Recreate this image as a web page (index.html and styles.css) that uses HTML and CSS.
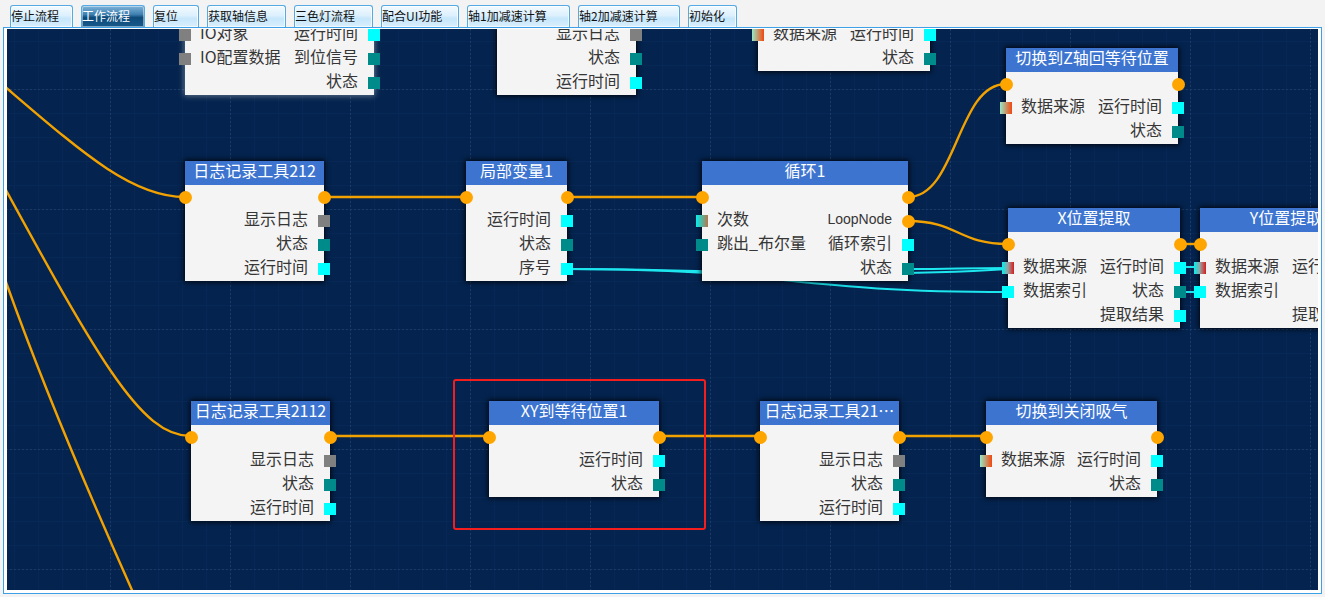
FILE: index.html
```html
<!DOCTYPE html>
<html lang="zh-CN">
<head>
<meta charset="utf-8">
<title>流程编辑器</title>
<link rel="stylesheet" href="styles.css">
</head>
<body>
<div class="tabs">
  <div class="tab">停止流程</div>
  <div class="tab active">工作流程</div>
  <div class="tab">复位</div>
  <div class="tab">获取轴信息</div>
  <div class="tab">三色灯流程</div>
  <div class="tab">配合UI功能</div>
  <div class="tab">轴1加减速计算</div>
  <div class="tab">轴2加减速计算</div>
  <div class="tab">初始化</div>
</div>
<div class="panel">
  <div class="canvas">
    <svg class="wires" width="1311" height="561" viewBox="0 0 1311 561">
      <defs>
        <pattern id="minor" width="24" height="24" patternUnits="userSpaceOnUse" x="7" y="12">
          <path d="M0 0.5H24M0.5 0V24" class="grid-minor"/>
        </pattern>
        <pattern id="major" width="120" height="120" patternUnits="userSpaceOnUse" x="103" y="60">
          <path d="M0 0.5H120M0.5 0V120" class="grid-major"/>
        </pattern>
      </defs>
      <rect width="1311" height="561" fill="url(#minor)"/>
      <rect width="1311" height="561" fill="url(#major)"/>
      <g class="wire-flow">
        <path d="M-60 9C53 101.5 113 168 178 168"/>
        <path d="M-30 108C93 334 133 407 184 407"/>
        <path d="M-7 236C33 351 93 491 143 601"/>
        <path d="M317 168H459"/>
        <path d="M560 168H695"/>
        <path d="M901 168C950 168 950 55 999 55"/>
        <path d="M901 192C951 192 951 215 1001 215"/>
        <path d="M1173 215H1193"/>
        <path d="M323 407H482"/>
        <path d="M652 407H753"/>
        <path d="M892 407H979"/>
      </g>
      <g class="wire-data">
        <path d="M560 240C700 240 850 250 1001 240"/>
        <path d="M560 240C780 240 781 263 1001 263"/>
        <path d="M901 240C951 240 951 239 1001 239"/>
        <path d="M1173 238H1193"/>
        <path d="M1173 263H1193"/>
      </g>
    </svg>

    <div class="node glow n-a">
      <div class="row"><span>IO对象</span><span class="rt">运行时间</span><i class="p l gray"></i><i class="p r cyan"></i></div>
      <div class="row"><span>IO配置数据</span><span class="rt">到位信号</span><i class="p l gray"></i><i class="p r teal"></i></div>
      <div class="row"><span class="rt">状态</span><i class="p r teal"></i></div>
    </div>

    <div class="node n-b">
      <div class="row"><span class="rt">显示日志</span><i class="p r gray"></i></div>
      <div class="row"><span class="rt">状态</span><i class="p r teal"></i></div>
      <div class="row"><span class="rt">运行时间</span><i class="p r cyan"></i></div>
    </div>

    <div class="node n-c">
      <div class="row"><span>数据来源</span><span class="rt">运行时间</span><i class="p l g1"></i><i class="p r cyan"></i></div>
      <div class="row"><span class="rt">状态</span><i class="p r teal"></i></div>
    </div>

    <div class="node n-d">
      <div class="node-head">切换到Z轴回等待位置</div>
      <div class="row"><i class="fl l"></i><i class="fl r"></i></div>
      <div class="row"><span>数据来源</span><span class="rt">运行时间</span><i class="p l g1"></i><i class="p r cyan"></i></div>
      <div class="row"><span class="rt">状态</span><i class="p r teal"></i></div>
    </div>

    <div class="node n-e">
      <div class="node-head">日志记录工具212</div>
      <div class="row"><i class="fl l"></i><i class="fl r"></i></div>
      <div class="row"><span class="rt">显示日志</span><i class="p r gray"></i></div>
      <div class="row"><span class="rt">状态</span><i class="p r teal"></i></div>
      <div class="row"><span class="rt">运行时间</span><i class="p r cyan"></i></div>
    </div>

    <div class="node n-f">
      <div class="node-head">局部变量1</div>
      <div class="row"><i class="fl l"></i><i class="fl r"></i></div>
      <div class="row"><span class="rt">运行时间</span><i class="p r cyan"></i></div>
      <div class="row"><span class="rt">状态</span><i class="p r teal"></i></div>
      <div class="row"><span class="rt">序号</span><i class="p r cyan"></i></div>
    </div>

    <div class="node n-g">
      <div class="node-head">循环1</div>
      <div class="row"><i class="fl l"></i><i class="fl r"></i></div>
      <div class="row"><span>次数</span><span class="rt latin">LoopNode</span><i class="p l g2"></i><i class="fl r"></i></div>
      <div class="row"><span>跳出_布尔量</span><span class="rt">循环索引</span><i class="p l teal"></i><i class="p r cyan"></i></div>
      <div class="row"><span class="rt">状态</span><i class="p r teal"></i></div>
    </div>

    <div class="node n-h">
      <div class="node-head">X位置提取</div>
      <div class="row"><i class="fl l"></i><i class="fl r"></i></div>
      <div class="row"><span>数据来源</span><span class="rt">运行时间</span><i class="p l g3"></i><i class="p r cyan"></i></div>
      <div class="row"><span>数据索引</span><span class="rt">状态</span><i class="p l cyan"></i><i class="p r teal"></i></div>
      <div class="row"><span class="rt">提取结果</span><i class="p r cyan"></i></div>
    </div>

    <div class="node n-i">
      <div class="node-head">Y位置提取</div>
      <div class="row"><i class="fl l"></i><i class="fl r"></i></div>
      <div class="row"><span>数据来源</span><span class="rt">运行时间</span><i class="p l g3"></i><i class="p r cyan"></i></div>
      <div class="row"><span>数据索引</span><span class="rt">状态</span><i class="p l cyan"></i><i class="p r teal"></i></div>
      <div class="row"><span class="rt">提取结果</span><i class="p r cyan"></i></div>
    </div>

    <div class="node n-j">
      <div class="node-head">日志记录工具2112</div>
      <div class="row"><i class="fl l"></i><i class="fl r"></i></div>
      <div class="row"><span class="rt">显示日志</span><i class="p r gray"></i></div>
      <div class="row"><span class="rt">状态</span><i class="p r teal"></i></div>
      <div class="row"><span class="rt">运行时间</span><i class="p r cyan"></i></div>
    </div>

    <div class="node n-k">
      <div class="node-head">XY到等待位置1</div>
      <div class="row"><i class="fl l"></i><i class="fl r"></i></div>
      <div class="row"><span class="rt">运行时间</span><i class="p r cyan"></i></div>
      <div class="row"><span class="rt">状态</span><i class="p r teal"></i></div>
    </div>

    <div class="node n-l">
      <div class="node-head">日志记录工具21⋯</div>
      <div class="row"><i class="fl l"></i><i class="fl r"></i></div>
      <div class="row"><span class="rt">显示日志</span><i class="p r gray"></i></div>
      <div class="row"><span class="rt">状态</span><i class="p r teal"></i></div>
      <div class="row"><span class="rt">运行时间</span><i class="p r cyan"></i></div>
    </div>

    <div class="node n-m">
      <div class="node-head">切换到关闭吸气</div>
      <div class="row"><i class="fl l"></i><i class="fl r"></i></div>
      <div class="row"><span>数据来源</span><span class="rt">运行时间</span><i class="p l g1"></i><i class="p r cyan"></i></div>
      <div class="row"><span class="rt">状态</span><i class="p r teal"></i></div>
    </div>

    <div class="sel"></div>
  </div>
</div>
</body>
</html>
```

FILE: styles.css
```css
* { box-sizing: border-box; }

html, body {
  margin: 0;
  padding: 0;
}

body {
  width: 1325px;
  height: 597px;
  overflow: hidden;
  background: #f3f3f3;
  font-family: "Noto Sans CJK SC", "Noto Sans", sans-serif;
}

/* ---------- tabs ---------- */
.tabs {
  display: flex;
  gap: 8px;
  height: 27px;
  padding: 5px 0 0 10px;
}

.tab {
  height: 22px;
  border: 1px solid #55aae4;
  border-bottom: none;
  border-radius: 3px 3px 0 0;
  background: linear-gradient(#f4faff 0%, #dcf0fd 45%, #c6e6fb 60%, #d9effd 100%);
  font-size: 12px;
  line-height: 20px;
  color: #111;
  white-space: nowrap;
  overflow: hidden;
  box-shadow: inset 0 0 0 1px rgba(255, 255, 255, 0.7);
}

.tab.active {
  background: linear-gradient(#7fb4da 0%, #3f80b0 40%, #0e4b7b 55%, #175a8b 100%);
  color: #fff;
  box-shadow: inset 0 0 0 1px rgba(255, 255, 255, 0.45);
}

.tab:nth-child(1) { width: 63px; }
.tab:nth-child(2) { width: 64px; }
.tab:nth-child(3) { width: 46px; }
.tab:nth-child(4) { width: 79px; }
.tab:nth-child(5) { width: 79px; }
.tab:nth-child(6) { width: 78px; }
.tab:nth-child(7) { width: 103px; }
.tab:nth-child(8) { width: 102px; }
.tab:nth-child(9) { width: 49px; }

/* ---------- panel / canvas ---------- */
.panel {
  margin-left: 3px;
  width: 1319px;
  height: 567px;
  border: 1px solid #3ea0e6;
  background: #ffffff;
  padding: 1px 3px 3px 3px;
}

.canvas {
  position: relative;
  width: 1311px;
  height: 561px;
  background: #04234e;
  overflow: hidden;
}

.wires {
  position: absolute;
  left: 0;
  top: 0;
}

.grid-minor {
  fill: none;
  stroke: #072854;
  stroke-width: 1;
}

.grid-major {
  fill: none;
  stroke: #1b3b66;
  stroke-width: 1;
  stroke-dasharray: 2 2;
}

.wire-flow path {
  fill: none;
  stroke: #f2a200;
  stroke-width: 2.4;
}

.wire-data path {
  fill: none;
  stroke: #1de6ef;
  stroke-width: 2;
}

/* ---------- nodes ---------- */
.node {
  position: absolute;
  background: #f4f4f4;
  box-shadow: 0 0 5px 1px rgba(0, 0, 0, 0.85);
  font-size: 16px;
  color: #363636;
}

.node.glow {
  box-shadow: 0 0 6px 1px rgba(215, 215, 215, 0.45);
}

.node-head {
  height: 24px;
  background: #3c74d0;
  color: #ffffff;
  text-align: center;
  line-height: 18px;
  white-space: nowrap;
  overflow: hidden;
}

.row {
  position: relative;
  display: flex;
  height: 24px;
  padding: 0 16px 0 15px;
  line-height: 18px;
  white-space: nowrap;
}

.rt { margin-left: auto; }

.latin {
  font-family: "Liberation Sans", sans-serif;
  font-size: 14px;
  line-height: 20px;
}

.p {
  position: absolute;
  top: 6px;
  width: 12px;
  height: 12px;
}
.p.l { left: -6px; }
.p.r { right: -6px; }

.fl {
  position: absolute;
  top: 5.5px;
  width: 13px;
  height: 13px;
  border-radius: 50%;
  background: #ffa500;
}
.fl.l { left: -6.5px; }
.fl.r { right: -6.5px; }

.gray { background: #808080; }
.teal { background: #008b8b; }
.cyan { background: #00ffff; }
.g1 { background: linear-gradient(to right, #96e8c8, #f4460e); }
.g2 { background: linear-gradient(to right, #00f0f0, #b4764a); }
.g3 { background: linear-gradient(to right, #00f2f2, #9aa0a0 50%, #d61c1c); }

/* node placement on the canvas (top nodes are scrolled partly out of view) */
.n-a { left: 178px; top: 0; width: 189px; }
.n-b { left: 490px; top: 0; width: 139px; }
.n-c { left: 751px; top: 0; width: 172px; }
.n-d { left: 999px; top: 19px; width: 172px; }
.n-e { left: 178px; top: 132px; width: 139px; }
.n-f { left: 459px; top: 132px; width: 101px; }
.n-g { left: 695px; top: 132px; width: 206px; }
.n-h { left: 1001px; top: 179px; width: 172px; }
.n-i { left: 1193px; top: 179px; width: 172px; }
.n-j { left: 184px; top: 372px; width: 139px; }
.n-k { left: 482px; top: 372px; width: 170px; }
.n-l { left: 753px; top: 372px; width: 139px; }
.n-m { left: 979px; top: 372px; width: 171px; }

.n-a .row:first-child,
.n-b .row:first-child,
.n-c .row:first-child {
  margin-top: -6px;
}

/* selection frame */
.sel {
  position: absolute;
  left: 446px;
  top: 350px;
  width: 253px;
  height: 151px;
  border: 2px solid #f41e1e;
  border-radius: 3px;
}
```
